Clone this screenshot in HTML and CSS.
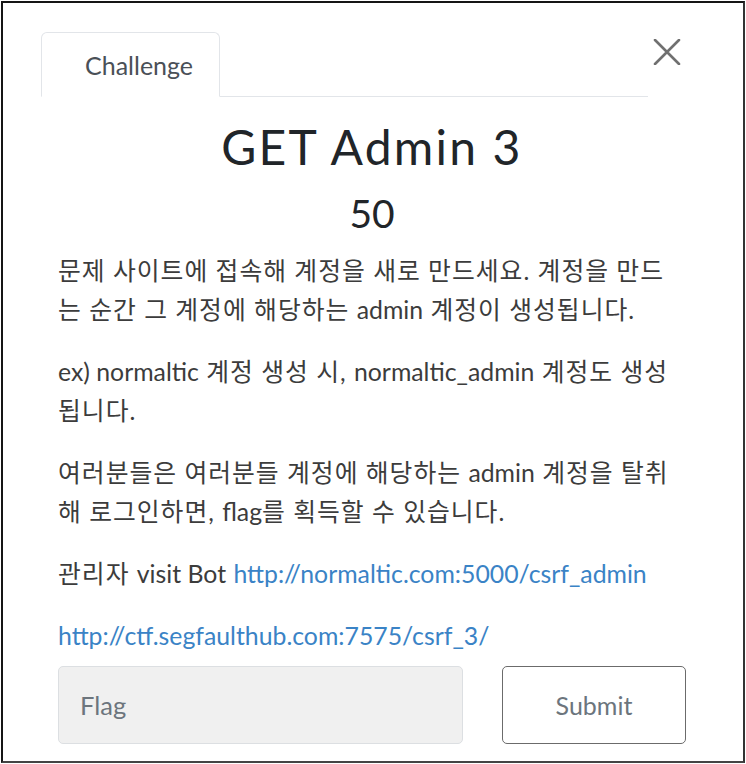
FILE: index.html
```html
<!DOCTYPE html>
<html lang="ko">
<head>
<meta charset="utf-8">
<title>GET Admin 3</title>
<link rel="stylesheet" href="styles.css">
</head>
<body>
<div class="frame">
  <div class="header">
    <ul class="tabs">
      <li class="tab">Challenge</li>
    </ul>
    <button class="close" type="button" aria-label="Close">
      <svg width="28" height="26" viewBox="0 0 28 26"><path d="M2 1 L26 25 M26 1 L2 25" stroke="#707070" stroke-width="2.6" stroke-linecap="round" fill="none"/></svg>
    </button>
  </div>
  <div class="content">
    <h2 class="title">GET Admin 3</h2>
    <h3 class="value">50</h3>
    <div class="desc">
      <p>문제 사이트에 접속해 계정을 새로 만드세요. 계정을 만드는 순간 그 계정에 해당하는 <span class="en">admin</span> 계정이 생성됩니다.</p>
      <p><span class="en">ex) normaltic</span> 계정 생성 시, <span class="en">normaltic_admin</span> 계정도 생성됩니다.</p>
      <p>여러분들은 여러분들 계정에 해당하는 <span class="en">admin</span> 계정을 탈취해 로그인하면, <span class="en">flag</span>를 획득할 수 있습니다.</p>
      <p>관리자 <span class="en">visit Bot</span> <a href="#">http://normaltic.com:5000/csrf_admin</a></p>
      <p class="last"><a href="#">http://ctf.segfaulthub.com:7575/csrf_3/</a></p>
    </div>
    <form class="submit-row">
      <input class="flag" type="text" placeholder="Flag">
      <button class="submit" type="button">Submit</button>
    </form>
  </div>
</div>
</body>
</html>
```

FILE: styles.css
```css
html, body {
  margin: 0;
  padding: 0;
  background: #fff;
}

.frame {
  box-sizing: border-box;
  width: 744px;
  height: 762px;
  margin: 1px;
  border: 2px solid #151515;
  border-right-color: #333;
  border-bottom-color: #444;
  overflow: hidden;
  font-family: Lato, "Noto Sans CJK KR", sans-serif;
}

.header {
  display: flex;
  align-items: flex-start;
  padding: 29px 57px 0 38px;
}

.tabs {
  flex: 1;
  display: flex;
  list-style: none;
  margin: 0;
  padding: 0;
  border-bottom: 1px solid #e2e5e9;
}

.tab {
  box-sizing: border-box;
  width: 179px;
  height: 65px;
  margin-bottom: -1px;
  padding: 17px 0 0 43px;
  border: 1px solid #e2e5e9;
  border-bottom-color: #fff;
  border-radius: 6px 6px 0 0;
  font-size: 25px;
  line-height: 30px;
  color: #4a5057;
  background: #fff;
}

.close {
  width: 38px;
  height: 30px;
  margin-top: 5px;
  padding: 0;
  border: 0;
  background: transparent;
  display: flex;
  align-items: center;
  justify-content: center;
}

.close svg {
  display: block;
}

.content {
  width: 628px;
  padding: 22px 0 0 55px;
}

.title {
  margin: 0;
  text-align: center;
  font-size: 48px;
  line-height: 56px;
  font-weight: 400;
  letter-spacing: 2.2px;
  color: #212529;
}

.value {
  margin: 14px 0 0;
  text-align: center;
  font-size: 39px;
  line-height: 48px;
  font-weight: 400;
  color: #212529;
}

.desc {
  margin-top: 14px;
}

.desc p {
  margin: 0 0 23px;
  font-size: 24.8px;
  line-height: 39px;
  letter-spacing: 1px;
  color: #3c3c3c;
}

.desc .en,
.desc a {
  letter-spacing: 0;
}

.desc p.last {
  margin-bottom: 11px;
}

.desc a {
  color: #3a83c6;
  text-decoration: none;
}

.submit-row {
  display: flex;
  align-items: stretch;
  margin: 0;
}

.flag {
  box-sizing: border-box;
  width: 405px;
  height: 78px;
  margin: 0;
  padding: 0 21px;
  border: 1px solid #dcdfe2;
  border-radius: 5px;
  background: #f0f0f0;
  font-family: Lato, "Noto Sans CJK KR", sans-serif;
  font-size: 25.5px;
  color: #495057;
  outline: none;
}

.flag::placeholder {
  color: #6c757d;
}

.submit {
  box-sizing: border-box;
  width: 184px;
  height: 78px;
  margin: 0 0 0 39px;
  border: 1.5px solid #6b6b6b;
  border-radius: 5px;
  background: #fff;
  font-family: Lato, "Noto Sans CJK KR", sans-serif;
  font-size: 25px;
  color: #6c757d;
}
```
